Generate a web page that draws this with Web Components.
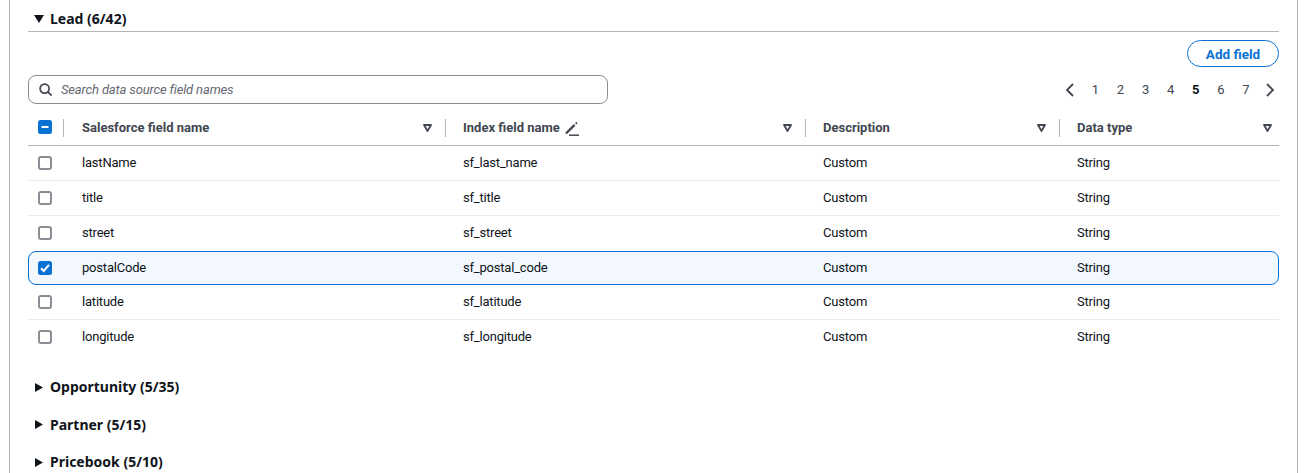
<!DOCTYPE html>
<html>
<head>
<meta charset="utf-8">
<style>
html, body { margin: 0; height: 473px; overflow: hidden; background: #fff; }
body { font: 13px/20px Roboto, "Liberation Sans", sans-serif; letter-spacing: -0.2px; color: #0f141a; }
</style>
</head>
<body>
<mapping-panel>
  <field-section label="Lead (6/42)" open>
    <section-tools></section-tools>
    <field-table>
      <field-row name="lastName" index="sf_last_name"></field-row>
      <field-row name="title" index="sf_title"></field-row>
      <field-row name="street" index="sf_street" last></field-row>
      <field-row name="postalCode" index="sf_postal_code" selected></field-row>
      <field-row name="latitude" index="sf_latitude"></field-row>
      <field-row name="longitude" index="sf_longitude" last></field-row>
    </field-table>
  </field-section>
  <field-section label="Opportunity (5/35)"></field-section>
  <field-section label="Partner (5/15)"></field-section>
  <field-section label="Pricebook (5/10)"></field-section>
</mapping-panel>

<script>
(function() {
    "use strict";

    const COLUMNS = '381px 360px 254px 220px';

    const checkbox = function(state) {
        if (state === 'checked') {
            return `<svg width="14" height="14" viewBox="0 0 14 14"><rect width="14" height="14" rx="2.5" fill="#0972d3"/><path d="M3 7.2 5.8 10 11 3.8" fill="none" stroke="#fff" stroke-width="2"/></svg>`;
        }
        if (state === 'mixed') {
            return `<svg width="14" height="14" viewBox="0 0 14 14"><rect width="14" height="14" rx="2.5" fill="#0972d3"/><path d="M3.5 7H10.5" fill="none" stroke="#fff" stroke-width="2"/></svg>`;
        }
        return `<svg width="14" height="14" viewBox="0 0 14 14"><rect x="1" y="1" width="12" height="12" rx="2" fill="#fff" stroke="#8c8c94" stroke-width="2"/></svg>`;
    };

    class MappingPanel extends HTMLElement {
        constructor() {
            super();
            this.attachShadow({mode: 'open'}).innerHTML = `
                <style>
                    :host { display: block; box-sizing: border-box; width: 1289px; height: 473px; margin-left: 9px;
                        padding: 0 18px; border-left: 1px solid #b4b4bb; border-right: 1px solid #b4b4bb; }
                </style>
                <slot></slot>`;
        }
    }

    class FieldSection extends HTMLElement {
        constructor() {
            super();
            const label = this.getAttribute('label');
            const open = this.hasAttribute('open');
            const caret = open
                ? '<path d="M0 0H10L5 8Z" fill="#0f141a"/>'
                : '<path d="M0 0V9L8 4.5Z" fill="#0f141a"/>';
            this.attachShadow({mode: 'open'}).innerHTML = `
                <style>
                    :host { display: block; width: 1251px; }
                    .head { display: flex; align-items: center; gap: 7px; height: 20px; padding-left: 7px;
                        font: 700 14px/20px "Noto Sans", "Open Sans", sans-serif; letter-spacing: 0; color: #0f141a; }
                    :host([open]) { padding-top: 9px; margin-bottom: 22px; }
                    :host(:not([open])) { height: 37.5px; }
                    :host([open]) .head { gap: 6px; padding: 0 0 2px 6px; border-bottom: 1px solid #b4b4bb; }
                    svg { flex: none; }
                    .label { white-space: nowrap; }
                </style>
                <div class="head">
                    <svg width="${open ? 10 : 8}" height="${open ? 8 : 9}" viewBox="0 0 ${open ? 10 : 8} ${open ? 8 : 9}">${caret}</svg>
                    <span class="label">${label}</span>
                </div>
                <slot></slot>`;
        }
    }

    class SectionTools extends HTMLElement {
        constructor() {
            super();
            let pages = '';
            for (let i = 1; i <= 7; i++) {
                pages += `<span class="${i === 5 ? 'page cur' : 'page'}">${i}</span>`;
            }
            this.attachShadow({mode: 'open'}).innerHTML = `
                <style>
                    :host { display: block; }
                    .top { display: flex; justify-content: flex-end; padding-top: 8px; height: 28px; }
                    button { box-sizing: border-box; width: 92px; height: 27px; padding: 0; background: #fff;
                        border: 1px solid #0972d3; border-radius: 14px; color: #0972d3;
                        font: 700 13.5px/20px Roboto, "Liberation Sans", sans-serif; }
                    .bar { display: flex; justify-content: space-between; align-items: center; margin-top: 7px; height: 29px; }
                    .search { box-sizing: border-box; display: flex; align-items: center; gap: 9px; width: 580px; height: 29px;
                        padding-left: 10px; border: 1px solid #8c8c94; border-radius: 8px; }
                    .search span { font-style: italic; color: #656871; letter-spacing: -0.15px; }
                    .pager { display: flex; align-items: center; height: 20px; padding-right: 4px; color: #424650; letter-spacing: 0; }
                    .page { width: 25.1px; text-align: center; }
                    .cur { font-weight: 700; color: #0f141a; }
                    .pager svg:first-child { margin-right: 7.5px; }
                    .pager svg:last-child { margin-left: 6.5px; }
                </style>
                <div class="top"><button type="button">Add field</button></div>
                <div class="bar">
                    <div class="search">
                        <svg width="13" height="13" viewBox="0 0 13 13" fill="none" stroke="#424650" stroke-width="1.7"><circle cx="5.6" cy="5.6" r="4.5"/><path d="M8.8 8.8 12.6 12.6"/></svg>
                        <span>Search data source field names</span>
                    </div>
                    <div class="pager">
                        <svg width="10" height="14" viewBox="0 0 10 14" fill="none" stroke="#424650" stroke-width="1.8"><path d="M8 1 2 7 8 13"/></svg>
                        ${pages}
                        <svg width="10" height="14" viewBox="0 0 10 14" fill="none" stroke="#424650" stroke-width="1.8"><path d="M2 1 8 7 2 13"/></svg>
                    </div>
                </div>`;
        }
    }

    class FieldTable extends HTMLElement {
        constructor() {
            super();
            const filter = '<svg class="filter" width="9" height="8" viewBox="0 0 9 8"><path d="M1 1H8L4.5 7Z" fill="none" stroke="#424650" stroke-width="1.8" stroke-linejoin="round"/></svg>';
            const pencil = '<svg class="pen" width="14" height="14" viewBox="0 0 14 14" fill="none" stroke="#424650"><path d="M1 11.5 9.6 2.8" stroke-width="2.4"/><path d="M10.6 1.8 12 0.6" stroke-width="1.8"/><path d="M4 13.2H14" stroke-width="1.5"/></svg>';
            this.attachShadow({mode: 'open'}).innerHTML = `
                <style>
                    :host { display: block; }
                    .head { display: grid; grid-template-columns: 36px ${COLUMNS}; height: 32px; margin-top: 9px;
                        border-bottom: 1px solid #b4b4bb; font-weight: 700; color: #424650; letter-spacing: 0; }
                    .sel { display: flex; align-items: center; padding-left: 10px; position: relative; top: -2px; }
                    .col { display: flex; align-items: center; box-sizing: border-box; padding: 0 13px 0 18px; position: relative; }
                    .col span { flex: 1; display: flex; align-items: center; white-space: nowrap; position: relative; top: -1px; }
                    .col::before { content: ""; position: absolute; left: 0; top: 6px; height: 18px; width: 1px; background: #b4b4bb; }
                    .first::before { left: -1px; }
                    .last { padding-right: 7px; }
                    .filter { flex: none; position: relative; top: -1px; }
                    .pen { margin-left: 5px; position: relative; top: 1px; }
                </style>
                <div class="head">
                    <div class="sel">${checkbox('mixed')}</div>
                    <div class="col first"><span>Salesforce field name</span>${filter}</div>
                    <div class="col"><span>Index field name${pencil}</span>${filter}</div>
                    <div class="col"><span>Description</span>${filter}</div>
                    <div class="col last"><span>Data type</span>${filter}</div>
                </div>
                <slot></slot>`;
        }
    }

    class FieldRow extends HTMLElement {
        constructor() {
            super();
            const selected = this.hasAttribute('selected');
            this.attachShadow({mode: 'open'}).innerHTML = `
                <style>
                    :host { display: grid; grid-template-columns: 36px ${COLUMNS}; box-sizing: border-box; height: 35px; align-items: center;
                        border-bottom: 1px solid #ebebf0; color: #0f141a; }
                    :host([last]) { border-bottom-color: transparent; }
                    :host([selected]) { grid-template-columns: 35px ${COLUMNS}; height: 34px; background: #f2f8fe;
                        border: 1px solid #0972d3; border-radius: 8px; }
                    .sel { display: flex; padding-left: 10px; }
                    :host([selected]) .sel { padding-left: 9px; }
                    .cell { padding-left: 18px; white-space: nowrap; }
                    svg { display: block; }
                </style>
                <div class="sel">${checkbox(selected ? 'checked' : 'empty')}</div>
                <div class="cell">${this.getAttribute('name')}</div>
                <div class="cell">${this.getAttribute('index')}</div>
                <div class="cell">Custom</div>
                <div class="cell">String</div>`;
        }
    }

    window.customElements.define('mapping-panel', MappingPanel);
    window.customElements.define('field-section', FieldSection);
    window.customElements.define('section-tools', SectionTools);
    window.customElements.define('field-table', FieldTable);
    window.customElements.define('field-row', FieldRow);
})();
</script>
</body>
</html>
